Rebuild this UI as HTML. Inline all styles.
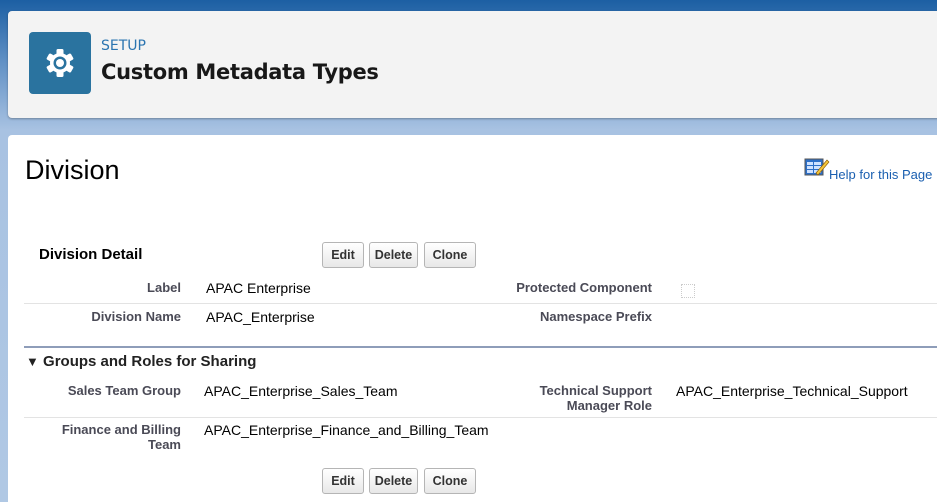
<!DOCTYPE html>
<html style="overflow:hidden;height:502px"><head><style>
body{margin:0;width:937px;height:502px;overflow:hidden;font-family:"Liberation Sans",Arial,sans-serif;background:linear-gradient(#1c5fa3 0px,#5f8fc4 60px,#a8c2e2 130px,#b0c8e4 502px);position:relative}
.hdr{position:absolute;left:8px;top:11px;width:940px;height:107px;background:#f3f3f3;border-radius:4px;box-shadow:0 1px 2px rgba(0,0,0,.3)}
.icon{position:absolute;left:21px;top:21px;width:62px;height:62px;background:#2a739f;border-radius:4px}
.setup{position:absolute;left:93px;top:27px;font-size:14px;color:#2a74b0;font-family:"DejaVu Sans",sans-serif}
.title{position:absolute;left:93px;top:49px;font-size:21px;font-weight:bold;color:#181818;font-family:"DejaVu Sans",sans-serif;letter-spacing:-0.3px}
.main{position:absolute;left:8px;top:135px;width:940px;height:367px;background:#fff;border-radius:4px 4px 0 0}
.abs{position:absolute}
.lbl{position:absolute;font-size:13px;font-weight:bold;color:#4a4a56;text-align:right}
.val{position:absolute;font-size:14px;color:#000}
.btn{position:absolute;height:24px;border:1px solid #b5b5b5;border-radius:3px;background:linear-gradient(#fff,#e8e8e8);font-size:12.5px;font-weight:bold;color:#333;line-height:24px;text-align:center}
.hr{position:absolute;height:1px;background:#e3e3e3}
</style></head><body>
<div class="hdr">
<div class="icon"><svg width="62" height="62" viewBox="0 0 62 62"><g fill="#fff" transform="translate(31,31)"><circle r="10"/><g id="t"><rect x="-3.5" y="-14" width="7" height="7" rx="1.5"/></g><use href="#t" transform="rotate(60)"/><use href="#t" transform="rotate(120)"/><use href="#t" transform="rotate(180)"/><use href="#t" transform="rotate(240)"/><use href="#t" transform="rotate(300)"/></g><circle cx="31" cy="31" r="6.5" fill="#2a739f"/><circle cx="31" cy="31" r="4" fill="#fff"/></svg></div>
<div class="setup">SETUP</div>
<div class="title">Custom Metadata Types</div>
</div>
<div class="main">
<div class="abs" style="left:17px;top:20px;font-size:27px;color:#000">Division</div>
<svg class="abs" style="left:796px;top:22px" width="26" height="20"><rect x="1" y="2" width="18" height="16" fill="#2d6fc7" stroke="#555"/><g fill="#cfe2ff"><rect x="3" y="5" width="6" height="3"/><rect x="10" y="5" width="7" height="3"/><rect x="3" y="9" width="6" height="3"/><rect x="10" y="9" width="7" height="3"/><rect x="3" y="13" width="6" height="3"/><rect x="10" y="13" width="7" height="3"/></g><path d="M12 16 L23 3 L25 5 L14 18 Z" fill="#f3c43a" stroke="#8a5a00" stroke-width=".6"/></svg>
<div class="abs" style="left:821px;top:32px;font-size:13px;color:#1a5fb0">Help for this Page</div>
<div class="abs" style="left:31px;top:111px;font-size:15px;font-weight:bold;color:#000">Division Detail</div>
<div class="btn" style="left:314px;top:107px;width:40px">Edit</div>
<div class="btn" style="left:361px;top:107px;width:47px">Delete</div>
<div class="btn" style="left:416px;top:107px;width:50px">Clone</div>
<div class="lbl" style="right:767px;top:145px">Label</div>
<div class="val" style="left:198px;top:145px">APAC Enterprise</div>
<div class="lbl" style="right:296px;top:145px">Protected Component</div>
<div class="abs" style="left:673px;top:149px;width:12px;height:12px;border:1px dotted #ccc"></div>
<div class="hr" style="left:16px;top:168px;width:930px"></div>
<div class="lbl" style="right:767px;top:174px">Division Name</div>
<div class="val" style="left:198px;top:174px">APAC_Enterprise</div>
<div class="lbl" style="right:296px;top:174px">Namespace Prefix</div>
<div class="abs" style="left:16px;top:211px;width:930px;height:2px;background:#8e9db9"></div>
<div class="abs" style="left:18px;top:218px;font-size:15px;font-weight:bold;color:#222"><span style="font-size:13px">▼</span> Groups and Roles for Sharing</div>
<div class="lbl" style="right:767px;top:248px">Sales Team Group</div>
<div class="val" style="left:196px;top:248px">APAC_Enterprise_Sales_Team</div>
<div class="lbl" style="right:296px;top:248px;line-height:15px">Technical Support<br>Manager Role</div>
<div class="val" style="left:668px;top:248px">APAC_Enterprise_Technical_Support</div>
<div class="hr" style="left:16px;top:282px;width:930px"></div>
<div class="lbl" style="right:767px;top:287px;line-height:15px">Finance and Billing<br>Team</div>
<div class="val" style="left:196px;top:287px">APAC_Enterprise_Finance_and_Billing_Team</div>
<div class="btn" style="left:314px;top:333px;width:40px">Edit</div>
<div class="btn" style="left:361px;top:333px;width:47px">Delete</div>
<div class="btn" style="left:416px;top:333px;width:50px">Clone</div>
</div>
</body></html>
